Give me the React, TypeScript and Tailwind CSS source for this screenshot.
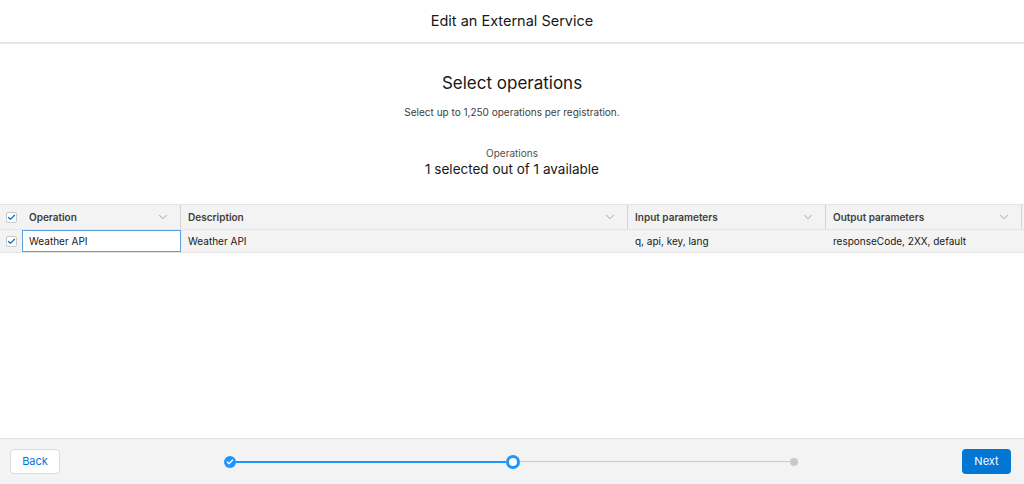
import { ChevronDown, Check } from "lucide-react";

const COLS = "grid-cols-[22px_159px_447px_198px_196px_1fr]";

function Box() {
  return (
    <span className="flex h-[11px] w-[11px] items-center justify-center rounded-[2px] border border-[#c9c9c9] bg-white">
      <Check className="h-[9px] w-[9px] text-[#0176d3]" strokeWidth={3.5} />
    </span>
  );
}

function HeadCell({ label }: { label: string }) {
  return (
    <div className="flex items-center justify-between border-r border-[#d4d4d4] pl-[7px] pr-[10px]">
      <span className="font-semibold text-[#3e3e3c]">{label}</span>
      <ChevronDown className="h-[14px] w-[14px] text-[#8a8a8a]" strokeWidth={1.25} />
    </div>
  );
}

export default function App() {
  return (
    <div
      className="flex h-[484px] w-[1024px] flex-col bg-white text-[#181818]"
      style={{ fontFamily: "Inter, 'Noto Sans', sans-serif" }}
    >
      {/* Modal header */}
      <div className="flex h-[44px] shrink-0 items-center justify-center border-b-2 border-[#e5e5e5] text-[14.5px]">
        Edit an External Service
      </div>

      <div className="flex flex-1 flex-col">
        <div className="flex flex-col items-center pt-[27px]">
          <h2 className="text-[17px] leading-[24px]">Select operations</h2>
          <p className="mt-[10px] text-[10px] text-[#3e3e3c]">
            Select up to 1,250 operations per registration.
          </p>
          <p className="mt-[26px] text-[10px] text-[#514f4d]">Operations</p>
          <p className="text-[13.5px] leading-[17px]">1 selected out of 1 available</p>
        </div>

        {/* Table */}
        <div className="mt-[26px] text-[10px]">
          <div className={`grid ${COLS} h-[26px] border-y border-[#e5e5e5] bg-[#f3f3f3]`}>
            <div className="flex items-center justify-center">
              <Box />
            </div>
            <HeadCell label="Operation" />
            <HeadCell label="Description" />
            <HeadCell label="Input parameters" />
            <HeadCell label="Output parameters" />
            <div />
          </div>
          <div className={`grid ${COLS} h-[23px] border-b border-[#e5e5e5] bg-[#f3f3f3]`}>
            <div className="flex items-center justify-center">
              <Box />
            </div>
            <div className="flex items-center border border-[#5a9fe0] bg-white pl-[6px]">Weather API</div>
            <div className="flex items-center pl-[7px]">Weather API</div>
            <div className="flex items-center pl-[7px]">q, api, key, lang</div>
            <div className="flex items-center pl-[7px]">responseCode, 2XX, default</div>
            <div />
          </div>
        </div>
      </div>

      {/* Footer */}
      <div className="flex h-[46px] shrink-0 items-center border-t border-[#e0e0e0] bg-[#f3f3f3] px-[10px] text-[11px]">
        <button className="h-[25px] w-[50px] rounded-[4px] border border-[#dddbda] bg-white text-[#0176d3]">
          Back
        </button>
        <div className="flex flex-1 justify-center">
          <div className="flex w-[574px] items-center">
            <span className="flex h-[12px] w-[12px] items-center justify-center rounded-full bg-[#1b96ff]">
              <Check className="h-[8px] w-[8px] text-white" strokeWidth={4} />
            </span>
            <span className="h-[2px] flex-1 bg-[#1b96ff]" />
            <span className="h-[14px] w-[14px] rounded-full border-[3px] border-[#1b96ff] bg-white" />
            <span className="h-px flex-1 bg-[#c9c9c9]" />
            <span className="h-[8px] w-[8px] rounded-full bg-[#c9c9c9]" />
          </div>
        </div>
        <button className="mr-[3px] h-[25px] w-[49px] rounded-[4px] bg-[#0176d3] text-white">Next</button>
      </div>
    </div>
  );
}
